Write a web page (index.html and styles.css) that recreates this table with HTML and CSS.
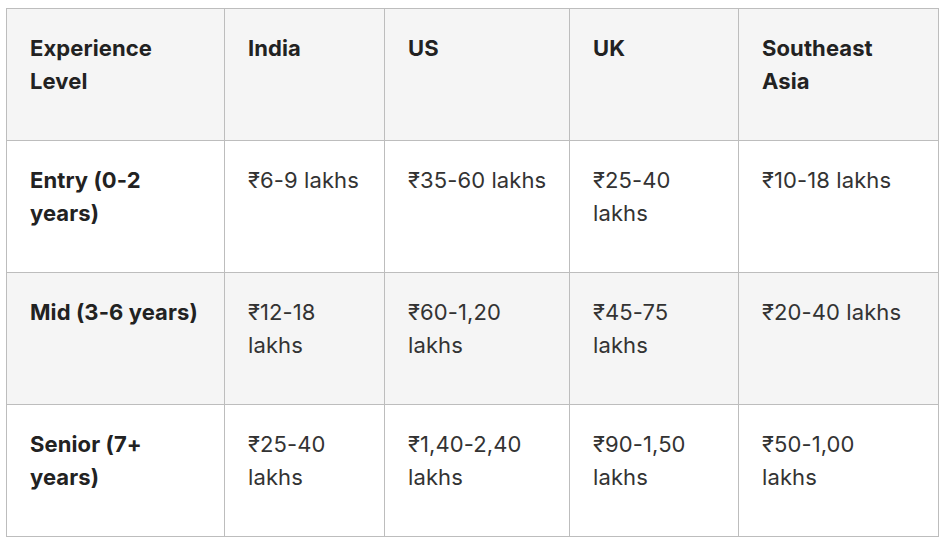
FILE: index.html
```html
<!DOCTYPE html>
<html>
<head>
<meta charset="utf-8">
<link rel="stylesheet" href="styles.css">
</head>
<body>
<table class="salary">
  <colgroup>
    <col class="c1"><col class="c2"><col class="c3"><col class="c4"><col class="c5">
  </colgroup>
  <thead>
    <tr class="shade">
      <th>Experience<br>Level</th>
      <th>India</th>
      <th>US</th>
      <th>UK</th>
      <th>Southeast<br>Asia</th>
    </tr>
  </thead>
  <tbody>
    <tr>
      <td class="lvl">Entry (0-2<br>years)</td>
      <td>₹6-9 lakhs</td>
      <td>₹35-60 lakhs</td>
      <td>₹25-40<br>lakhs</td>
      <td>₹10-18 lakhs</td>
    </tr>
    <tr class="shade">
      <td class="lvl">Mid (3-6 years)</td>
      <td>₹12-18<br>lakhs</td>
      <td>₹60-1,20<br>lakhs</td>
      <td>₹45-75<br>lakhs</td>
      <td>₹20-40 lakhs</td>
    </tr>
    <tr>
      <td class="lvl">Senior (7+<br>years)</td>
      <td>₹25-40<br>lakhs</td>
      <td>₹1,40-2,40<br>lakhs</td>
      <td>₹90-1,50<br>lakhs</td>
      <td>₹50-1,00<br>lakhs</td>
    </tr>
  </tbody>
</table>
</body>
</html>
```
FILE: styles.css
```css
html, body {
  margin: 0;
  padding: 0;
  background: #ffffff;
}
body {
  padding: 8px 0 0 6px;
  font-family: Inter, "Noto Sans", "DejaVu Sans", sans-serif;
  color: #333333;
}
.salary {
  border-collapse: collapse;
  table-layout: fixed;
  width: 932px;
}
.c1 { width: 218px; }
.c2 { width: 160px; }
.c3 { width: 185px; }
.c4 { width: 169px; }
.c5 { width: 200px; }
.salary th,
.salary td {
  border: 1px solid #bdbdbd;
  height: 132px;
  box-sizing: border-box;
  padding: 23px 23px 19px;
  vertical-align: top;
  text-align: left;
  font-size: 22px;
  line-height: 33px;
  letter-spacing: 0.1px;
  white-space: nowrap;
}
.salary th,
.salary td.lvl {
  font-weight: 700;
  color: #222222;
}
.salary td {
  font-weight: 400;
}
.shade {
  background: #f5f5f5;
}
```
